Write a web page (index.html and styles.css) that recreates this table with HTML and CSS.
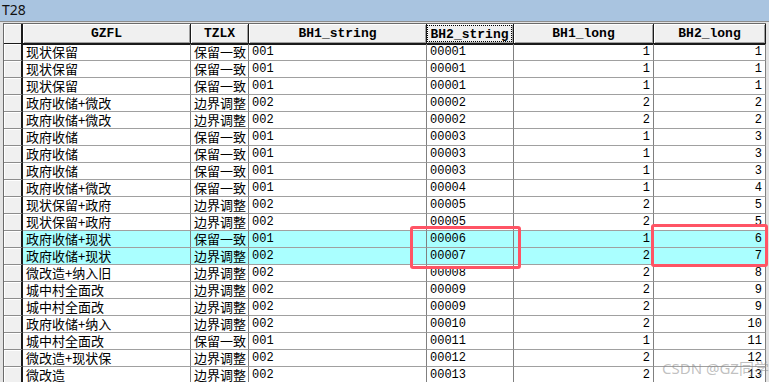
FILE: index.html
```html
<!DOCTYPE html>
<html lang="zh">
<head>
<meta charset="utf-8">
<title>T28</title>
<link rel="stylesheet" href="styles.css">
</head>
<body>
<div class="window">
  <div class="titlebar">T28</div>
  <div class="frame">
    <div class="grid">
      <div class="row head">
        <div class="rh"></div>
        <div class="hc">GZFL</div>
        <div class="hc">TZLX</div>
        <div class="hc">BH1_string</div>
        <div class="hc focus"><span>BH2_string</span></div>
        <div class="hc">BH1_long</div>
        <div class="hc">BH2_long</div>
      </div>
      <div class="row"><div class="rh"></div><div class="c t">现状保留</div><div class="c t">保留一致</div><div class="c n">001</div><div class="c n">00001</div><div class="c r">1</div><div class="c r">1</div></div>
      <div class="row"><div class="rh"></div><div class="c t">现状保留</div><div class="c t">保留一致</div><div class="c n">001</div><div class="c n">00001</div><div class="c r">1</div><div class="c r">1</div></div>
      <div class="row"><div class="rh"></div><div class="c t">现状保留</div><div class="c t">保留一致</div><div class="c n">001</div><div class="c n">00001</div><div class="c r">1</div><div class="c r">1</div></div>
      <div class="row"><div class="rh"></div><div class="c t">政府收储+微改</div><div class="c t">边界调整</div><div class="c n">002</div><div class="c n">00002</div><div class="c r">2</div><div class="c r">2</div></div>
      <div class="row"><div class="rh"></div><div class="c t">政府收储+微改</div><div class="c t">边界调整</div><div class="c n">002</div><div class="c n">00002</div><div class="c r">2</div><div class="c r">2</div></div>
      <div class="row"><div class="rh"></div><div class="c t">政府收储</div><div class="c t">保留一致</div><div class="c n">001</div><div class="c n">00003</div><div class="c r">1</div><div class="c r">3</div></div>
      <div class="row"><div class="rh"></div><div class="c t">政府收储</div><div class="c t">保留一致</div><div class="c n">001</div><div class="c n">00003</div><div class="c r">1</div><div class="c r">3</div></div>
      <div class="row"><div class="rh"></div><div class="c t">政府收储</div><div class="c t">保留一致</div><div class="c n">001</div><div class="c n">00003</div><div class="c r">1</div><div class="c r">3</div></div>
      <div class="row"><div class="rh"></div><div class="c t">政府收储+微改</div><div class="c t">保留一致</div><div class="c n">001</div><div class="c n">00004</div><div class="c r">1</div><div class="c r">4</div></div>
      <div class="row"><div class="rh"></div><div class="c t">现状保留+政府</div><div class="c t">边界调整</div><div class="c n">002</div><div class="c n">00005</div><div class="c r">2</div><div class="c r">5</div></div>
      <div class="row"><div class="rh"></div><div class="c t">现状保留+政府</div><div class="c t">边界调整</div><div class="c n">002</div><div class="c n">00005</div><div class="c r">2</div><div class="c r">5</div></div>
      <div class="row sel"><div class="rh"></div><div class="c t">政府收储+现状</div><div class="c t">保留一致</div><div class="c n">001</div><div class="c n">00006</div><div class="c r">1</div><div class="c r">6</div></div>
      <div class="row sel"><div class="rh"></div><div class="c t">政府收储+现状</div><div class="c t">边界调整</div><div class="c n">002</div><div class="c n">00007</div><div class="c r">2</div><div class="c r">7</div></div>
      <div class="row"><div class="rh"></div><div class="c t">微改造+纳入旧</div><div class="c t">边界调整</div><div class="c n">002</div><div class="c n">00008</div><div class="c r">2</div><div class="c r">8</div></div>
      <div class="row"><div class="rh"></div><div class="c t">城中村全面改</div><div class="c t">边界调整</div><div class="c n">002</div><div class="c n">00009</div><div class="c r">2</div><div class="c r">9</div></div>
      <div class="row"><div class="rh"></div><div class="c t">城中村全面改</div><div class="c t">边界调整</div><div class="c n">002</div><div class="c n">00009</div><div class="c r">2</div><div class="c r">9</div></div>
      <div class="row"><div class="rh"></div><div class="c t">政府收储+纳入</div><div class="c t">边界调整</div><div class="c n">002</div><div class="c n">00010</div><div class="c r">2</div><div class="c r">10</div></div>
      <div class="row"><div class="rh"></div><div class="c t">城中村全面改</div><div class="c t">保留一致</div><div class="c n">001</div><div class="c n">00011</div><div class="c r">1</div><div class="c r">11</div></div>
      <div class="row"><div class="rh"></div><div class="c t">微改造+现状保</div><div class="c t">边界调整</div><div class="c n">002</div><div class="c n">00012</div><div class="c r">2</div><div class="c r">12</div></div>
      <div class="row"><div class="rh"></div><div class="c t">微改造</div><div class="c t">边界调整</div><div class="c n">002</div><div class="c n">00013</div><div class="c r">2</div><div class="c r">13</div></div>
    </div>
  </div>
  <div class="mark mark-a"></div>
  <div class="mark mark-b"></div>
  <div class="watermark">CSDN @GZ同学</div>
</div>
</body>
</html>
```

FILE: styles.css
```css
html, body {
  margin: 0;
  padding: 0;
}
body {
  width: 769px;
  height: 382px;
  overflow: hidden;
  background: #f0f0f0;
}
.window {
  position: relative;
  width: 769px;
  height: 382px;
  overflow: hidden;
}
.titlebar {
  height: 21px;
  line-height: 20px;
  padding-left: 2px;
  background: #a9c4e0;
  color: #111;
  font-family: "Noto Sans", "Liberation Sans", sans-serif;
  font-size: 14px;
}
.frame {
  border-top: 1px solid #8c8c8c;
  padding: 1px 0 0 3px;
  background: #e3e3e3;
}
.grid {
  border-top: 1px solid #6a6a6a;
  border-left: 1px solid #6a6a6a;
  width: 762px;
  background: #ffffff;
}
.row {
  display: grid;
  grid-template-columns: 19px 168px 58px 178px 87px 140px 112px;
  height: 17px;
}
.row.head {
  height: 20px;
}
.rh {
  box-sizing: border-box;
  background: #f0f0f0;
  border-right: 2px solid #1a1a1a;
  border-bottom: 1px solid #8c8c8c;
  box-shadow: inset 1px 1px 0 #ffffff;
}
.head .rh {
  border-bottom: 2px solid #1a1a1a;
}
.hc {
  box-sizing: border-box;
  background: #f0f0f0;
  border-right: 1px solid #1a1a1a;
  border-bottom: 2px solid #1a1a1a;
  box-shadow: inset 1px 1px 0 #ffffff, inset -1px -1px 0 #a0a0a0;
  text-align: center;
  font-family: "Liberation Mono", monospace;
  font-weight: bold;
  font-size: 13px;
  line-height: 19px;
  color: #000;
}
.hc.focus {
  padding: 1px 1px 0 0;
}
.hc.focus span {
  display: block;
  height: 15px;
  line-height: 17px;
  border: 1px dotted #000;
}
.c {
  box-sizing: border-box;
  border-right: 1px solid #808080;
  border-bottom: 1px solid #a0a0a0;
  line-height: 16px;
  color: #000;
  white-space: nowrap;
}
.c.t {
  padding-left: 3px;
  font-family: "Noto Sans CJK SC", "Noto Sans", sans-serif;
  font-size: 13px;
}
.c.n {
  padding-left: 3px;
  font-family: "Liberation Mono", monospace;
  font-size: 12px;
}
.c.r {
  padding-right: 3px;
  text-align: right;
  font-family: "Liberation Mono", monospace;
  font-size: 12px;
}
.sel .c {
  background: #aaffff;
}
.mark {
  position: absolute;
  box-sizing: border-box;
  border: 3px solid #ff5465;
  border-radius: 3px;
}
.mark-a {
  left: 410px;
  top: 226px;
  width: 111px;
  height: 43px;
}
.mark-b {
  left: 651px;
  top: 224px;
  width: 117px;
  height: 43px;
}
.watermark {
  position: absolute;
  left: 662px;
  top: 357px;
  font-family: "Noto Sans", "Noto Sans CJK SC", sans-serif;
  font-size: 15px;
  color: rgba(140, 140, 140, 0.55);
  white-space: nowrap;
}
```
